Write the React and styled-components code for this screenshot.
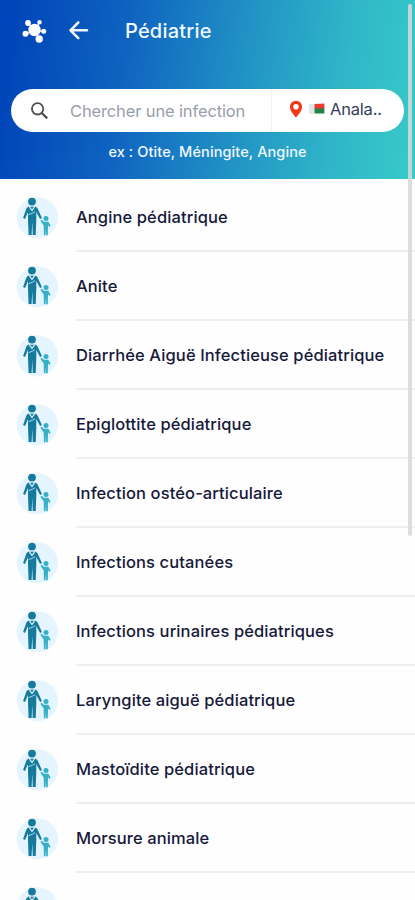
import React from "react";
import styled, { createGlobalStyle } from "styled-components";

const GlobalStyle = createGlobalStyle`
  * {
    box-sizing: border-box;
  }
  body {
    margin: 0;
    background: #fefefe;
    font-family: Inter, "Liberation Sans", sans-serif;
  }
`;

const Screen = styled.div`
  position: relative;
  width: 415px;
  height: 900px;
  overflow: hidden;
`;

const Header = styled.header`
  height: 179px;
  background: linear-gradient(98deg, #0045b9 3%, #0f63c0 30%, #2193c5 58%, #2fb5c8 80%, #37cbc9 100%);
  color: #f1f7ff;
`;

const TitleBar = styled.div`
  display: flex;
  align-items: center;
  height: 60px;
  padding-left: 22px;
`;

const BackButton = styled.button`
  display: flex;
  margin-left: 21px;
  padding: 0;
  border: none;
  background: none;
  color: #f1f7ff;
`;

const Title = styled.h1`
  margin: 1px 0 0 35px;
  font-size: 20px;
  font-weight: 500;
  line-height: 26px;
  letter-spacing: 0.2px;
`;

const SearchBar = styled.div`
  display: flex;
  height: 43px;
  margin: 29px 11px 0;
  border-radius: 22px;
  background: #fff;
`;

const SearchField = styled.div`
  display: flex;
  align-items: center;
  width: 261px;
  padding-left: 18px;
  border-right: 1px solid #eef0f2;
`;

const Placeholder = styled.span`
  margin-left: 20px;
  color: #989eaa;
  font-size: 16.5px;
  line-height: 22px;
  letter-spacing: -0.14px;
  white-space: nowrap;
`;

const Region = styled.div`
  display: flex;
  align-items: center;
  padding: 0 0 4px 17px;
`;

const Flag = styled.svg`
  margin-left: 6px;
`;

const RegionName = styled.span`
  margin-left: 5px;
  color: #343c5c;
  font-size: 16.5px;
  line-height: 22px;
  letter-spacing: -0.2px;
`;

const Hint = styled.p`
  margin: 10px 0 0;
  text-align: center;
  font-size: 14.5px;
  font-weight: 500;
  line-height: 20px;
  letter-spacing: 0.1px;
`;

const List = styled.ul`
  margin: 0;
  padding: 4px 0 0;
  list-style: none;
`;

const Row = styled.li`
  display: flex;
  height: 69px;
  padding-left: 16px;
`;

const Avatar = styled.div`
  width: 42px;
  height: 42px;
  margin-top: 14px;
`;

const RowLabel = styled.div`
  flex: 1;
  margin-left: 18px;
  padding-top: 22px;
  border-bottom: 2px solid #efeff0;
  color: #16193a;
  font-size: 16.5px;
  font-weight: 500;
  line-height: 24px;
  letter-spacing: 0.11px;
  white-space: nowrap;
`;

const ScrollThumb = styled.div`
  position: absolute;
  top: 4px;
  right: 3px;
  width: 4px;
  height: 532px;
  border-radius: 2px;
  background: rgba(216, 216, 216, 0.88);
`;

const infections = [
  "Angine pédiatrique",
  "Anite",
  "Diarrhée Aiguë Infectieuse pédiatrique",
  "Epiglottite pédiatrique",
  "Infection ostéo-articulaire",
  "Infections cutanées",
  "Infections urinaires pédiatriques",
  "Laryngite aiguë pédiatrique",
  "Mastoïdite pédiatrique",
  "Morsure animale",
  "",
];

const LogoIcon = () => (
  <svg width="25" height="25" viewBox="0 0 25 25" fill="#fff" stroke="#fff">
    <path d="M12.5 12.5 6 5M12.5 12.5 17.5 4.5M12.5 12.5 22 13.5M12.5 12.5 17.5 21.5M12.5 12.5 3.5 16" strokeWidth="1.2" />
    <g stroke="none">
      <circle cx="12.5" cy="12" r="6.2" />
      <circle cx="6" cy="5" r="2.9" />
      <circle cx="17.5" cy="4.3" r="2.2" />
      <circle cx="21.7" cy="13.3" r="2.5" />
      <circle cx="17.2" cy="21" r="3.7" />
      <circle cx="3.5" cy="15.7" r="3" />
    </g>
  </svg>
);

const ArrowIcon = () => (
  <svg width="22" height="20" viewBox="0 0 22 20" fill="none" stroke="currentColor" strokeWidth="2.5" strokeLinecap="round" strokeLinejoin="round">
    <path d="M19 10.3H2.5M10.3 2.5 2.5 10.3l7.8 7.8" />
  </svg>
);

const SearchIcon = () => (
  <svg width="21" height="21" viewBox="0 0 21 21" fill="none" stroke="#4c4d50" strokeWidth="1.8">
    <circle cx="8.6" cy="8.8" r="5.7" />
    <path d="m12.8 13 5.4 5.4" strokeWidth="2.2" />
  </svg>
);

const PinIcon = () => (
  <svg width="14" height="18" viewBox="0 0 14 18">
    <path d="M7 .8A6.1 6.1 0 0 0 .9 6.9C.9 11.2 7 17.3 7 17.3s6.1-6.1 6.1-10.4A6.1 6.1 0 0 0 7 .8z" fill="#f03a17" />
    <circle cx="7" cy="6.7" r="2.7" fill="#fff" />
  </svg>
);

const FlagIcon = () => (
  <Flag width="16" height="12" viewBox="0 0 16 12">
    <path d="M0 1.2 5.5.8v10L0 11z" fill="#e3e5e6" />
    <path d="M5.5.9 15.4.5v5.4H5.5z" fill="#ed3a32" />
    <path d="M5.5 5.5h9.9v5H5.5z" fill="#218345" />
  </Flag>
);

const FamilyIcon = () => (
  <svg width="42" height="42" viewBox="0 0 42 42">
    <circle cx="21.3" cy="20.8" r="20.6" fill="#e4f5ff" />
    <g fill="#167a9e">
      <circle cx="16" cy="4.6" r="3.9" />
      <path d="M12 9.8h8l1.6 1.6 4.3 9.5-1.8 1-3.8-7v8l-.6 15.2h-3l-.4-13-.7 13h-3L12 22.9v-8l-3 7-1.9-1 3.3-9.5z" />
    </g>
    <path d="m13.4 9.9 2.6 3.5 2.6-3.5" fill="none" stroke="#d7eff7" strokeWidth="1.2" />
    <path d="m12.6 17.6 3.4-1.2 3.2-1.7" fill="none" stroke="#a9d5e2" strokeWidth="1" />
    <g fill="#35b0c6">
      <circle cx="30" cy="21.5" r="2.5" />
      <path d="M28 24.8h4.3l2.2 3.6-1 1.7-1.5-1.8-.2 9.9h-1.6l-.3-6.3-.4 6.3h-1.6l-.2-9.7-3.3-4.8 1-1z" />
    </g>
  </svg>
);

const InfectionRow = ({ name }) => (
  <Row>
    <Avatar>
      <FamilyIcon />
    </Avatar>
    <RowLabel>{name}</RowLabel>
  </Row>
);

const App = () => {
  return (
    <>
      <GlobalStyle />
      <Screen>
        <Header>
          <TitleBar>
            <LogoIcon />
            <BackButton aria-label="Retour">
              <ArrowIcon />
            </BackButton>
            <Title>Pédiatrie</Title>
          </TitleBar>
          <SearchBar>
            <SearchField>
              <SearchIcon />
              <Placeholder>Chercher une infection</Placeholder>
            </SearchField>
            <Region>
              <PinIcon />
              <FlagIcon />
              <RegionName>Anala..</RegionName>
            </Region>
          </SearchBar>
          <Hint>ex : Otite, Méningite, Angine</Hint>
        </Header>
        <List>
          {infections.map((name) => (
            <InfectionRow key={name} name={name} />
          ))}
        </List>
        <ScrollThumb />
      </Screen>
    </>
  );
};

export default App;
